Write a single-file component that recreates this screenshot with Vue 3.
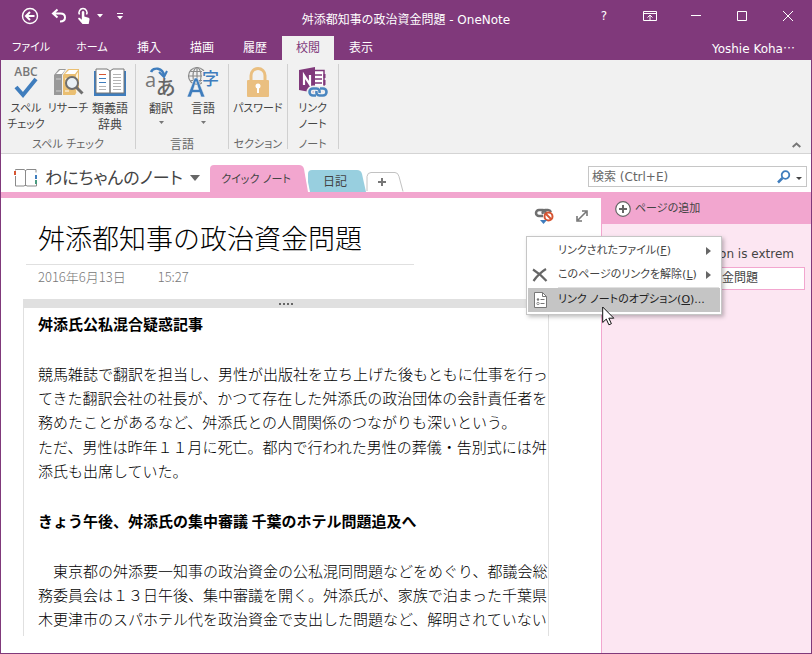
<script setup>
import { ref } from 'vue'

const tabs = [
  { label: 'ファイル', wide: true },
  { label: 'ホーム', wide: true },
  { label: '挿入' },
  { label: '描画' },
  { label: '履歴' },
  { label: '校閲' },
  { label: '表示' },
]
const activeTab = ref('校閲')

const groups = [
  {
    name: 'スペル チェック',
    tools: [
      { icon: 'spell', lines: ['スペル', 'チェック'] },
      { icon: 'research', lines: ['リサーチ'] },
      { icon: 'thesaurus', lines: ['類義語', '辞典'] },
    ],
  },
  {
    name: '言語',
    tools: [
      { icon: 'translate', lines: ['翻訳'], menu: true },
      { icon: 'language', lines: ['言語'], menu: true },
    ],
  },
  { name: 'セクション', tools: [{ icon: 'lock', lines: ['パスワード'] }] },
  { name: 'ノート', tools: [{ icon: 'linked', lines: ['リンク', 'ノート'] }] },
]

// Katakana labels are set one size smaller than kanji labels.
const isKana = (text) => /^[ァ-ヶー ]+$/.test(text)

const noteTitle = '舛添都知事の政治資金問題'
const query = ref('')
</script>

<template>
  <div class="window" lang="ja">
    <header class="titlebar">
      <div class="quick">
        <button class="q q-back" aria-label="戻る">
          <svg width="18" height="18" viewBox="0 0 18 18" fill="none" stroke="#fff"><circle cx="9" cy="9" r="7.5" stroke-width="1.4" /><path d="M13.5 9H5.5M9 5L5 9l4 4" stroke-width="2" /></svg>
        </button>
        <button class="q q-undo" aria-label="元に戻す">
          <svg width="16" height="16" viewBox="0 0 16 16" fill="none" stroke="#fff" stroke-width="2"><path d="M6.5 1.5L2 5.5l4.500 4M2 5.500h7.500c3 0 4.500 1.500 4.500 4s-2 4-5 4" /></svg>
        </button>
        <button class="q q-touch" aria-label="タッチ/マウス モードの切り替え">
          <svg width="14" height="18" viewBox="0 0 14 18"><path d="M2.500 7.500A4 4 0 1 1 9.500 7.500" fill="none" stroke="#fff" stroke-width="1.500" /><path d="M4.800 5a1.300 1.300 0 0 1 2.500 0v4.500l4.200 1.200c.8.3 1.200.9 1 1.700l-.8 4.600H5.500L1.200 12c-.3-1 .9-1.600 1.700-.9l1.900 1.600z" fill="#fff" /></svg>
          <svg class="q-caret" width="6" height="4" viewBox="0 0 6 4"><path d="M0 0h6L3 3.500z" fill="#fff" /></svg>
        </button>
        <button class="q q-more" aria-label="クイック アクセス ツール バーのユーザー設定">
          <svg width="6" height="7" viewBox="0 0 6 7"><path d="M0 0h6v1H0zM0 3h6L3 6.500z" fill="#fff" /></svg>
        </button>
      </div>
      <h1 class="caption">{{ noteTitle }} - OneNote</h1>
      <div class="controls">
        <button class="ctl" aria-label="ヘルプ">?</button>
        <button class="ctl" aria-label="リボンの表示オプション">
          <svg width="14" height="10" viewBox="0 0 14 10" fill="none" stroke="#fff"><path d="M.5.5h13v9H.5zM1 2.500h12M7 9V4M4.500 6.500L7 4l2.500 2.500" /></svg>
        </button>
        <button class="ctl" aria-label="最小化">
          <svg width="10" height="2" viewBox="0 0 10 2"><path d="M0 0h10v1H0z" fill="#fff" /></svg>
        </button>
        <button class="ctl" aria-label="最大化">
          <svg width="10" height="10" viewBox="0 0 10 10"><path d="M.5.500h9v9h-9z" fill="none" stroke="#fff" /></svg>
        </button>
        <button class="ctl" aria-label="閉じる">
          <svg width="10" height="10" viewBox="0 0 10 10"><path d="M0 0l10 10M10 0L0 10" stroke="#fff" /></svg>
        </button>
      </div>
    </header>

    <nav class="tabs">
      <button
        v-for="t in tabs"
        :key="t.label"
        class="tab"
        :class="{ active: t.label === activeTab, wide: t.wide, kana: isKana(t.label) }"
        @click="activeTab = t.label"
      >{{ t.label }}</button>
      <button class="account">Yoshie Koha<span class="dots">…</span></button>
    </nav>

    <section class="ribbon">
      <div v-for="g in groups" :key="g.name" class="group">
        <div class="tools">
          <button v-for="t in g.tools" :key="t.icon" class="tool">
            <svg v-if="t.icon === 'spell'" width="32" height="32" viewBox="0 0 32 32">
              <text x="16" y="10" text-anchor="middle" font-size="12" font-family="Open Sans, sans-serif" font-weight="600" fill="#777">ABC</text>
              <path d="M6 21l7 8L26 13" fill="none" stroke="#3f7dbd" stroke-width="4" />
            </svg>
            <svg v-else-if="t.icon === 'research'" width="32" height="32" viewBox="0 0 32 32">
              <path d="M2 9l5-6h7l-4 6v20H2z" fill="#999" /><path d="M4 8l4-4h5l-3 4z" fill="#fff" /><path d="M4 13h5M4 25h5" stroke="#ccc" stroke-width="1" />
              <path d="M11 9l5-6h11v19l-4 7H11z" fill="#eabf72" /><path d="M13 8l4-4h9l-3 4z" fill="#fff" /><path d="M24 9l2-3v18l-2 3z" fill="#fff3d8" /><path d="M13 13h4M13 25h4" stroke="#fff" />
              <circle cx="20" cy="17" r="6" fill="#e9f0f5" stroke="#6f6f6f" stroke-width="2" /><path d="M24.500 21.500l6 6" stroke="#6f6f6f" stroke-width="3" />
            </svg>
            <svg v-else-if="t.icon === 'thesaurus'" width="32" height="32" viewBox="0 0 32 32">
              <path d="M0 5h32v25H0z" fill="#3f7dbd" /><path d="M2 3h11l3 2 3-2h11v24H2z" fill="#fff" stroke="#777" /><path d="M16 5v22" stroke="#777" stroke-width="1.500" />
              <path d="M5 8.500h7" stroke="#d65532" /><path d="M5 12.500h7M5 16.500h7" stroke="#3f7dbd" /><path d="M5 20.500h7M19 8.500h8M19 11.500h8M19 14.500h8M19 17.500h8M19 20.500h8M19 23.500h8M5 23.500h7" stroke="#b4b4b4" />
            </svg>
            <svg v-else-if="t.icon === 'translate'" width="32" height="32" viewBox="0 0 32 32">
              <text x="0" y="21" font-size="20" font-family="Open Sans, sans-serif" fill="#777">a</text>
              <text x="11" y="29" font-size="20" font-weight="500" font-family="Noto Sans CJK JP, sans-serif" fill="#666">あ</text>
              <path d="M6 6c2-5 12-5 13 4" fill="none" stroke="#3f7dbd" stroke-width="2.500" /><path d="M14 6l5 5 3-6" fill="none" stroke="#3f7dbd" stroke-width="2" />
            </svg>
            <svg v-else-if="t.icon === 'language'" width="32" height="32" viewBox="0 0 32 32">
              <g fill="none" stroke="#8a8a8a" stroke-width="1.200"><circle cx="10" cy="10" r="8.500" /><ellipse cx="10" cy="10" rx="4" ry="8.500" /><path d="M10 1v17M2 10h16M3.500 5.500h13M3.500 14.500h13" /></g>
              <path d="M15 5h17v15H15z" fill="#f1f1f1" />
              <text x="15" y="19" font-size="17" font-family="Noto Sans CJK JP, sans-serif" font-weight="500" fill="#3f7dbd">字</text>
              <path d="M0 31l7.500-19h3L18 31h-4l-1.500-4.500H5.500L4 31zM6.500 23.500h5L9 15.500z" fill="#3f7dbd" stroke="#f1f1f1" stroke-width=".6" />
            </svg>
            <svg v-else-if="t.icon === 'lock'" width="32" height="32" viewBox="0 0 32 32">
              <path d="M9 16V9.500a7 7 0 0 1 14 0V16" fill="none" stroke="#eabf80" stroke-width="3" /><rect x="5" y="14" width="22" height="17" rx="1" fill="#eabf80" />
              <circle cx="16" cy="20" r="2.500" fill="#fff" /><path d="M15 20h2v7h-2z" fill="#fff" />
            </svg>
            <svg v-else width="32" height="32" viewBox="0 0 32 32">
              <path d="M15 4.500h12v20H15z" fill="#fff" stroke="#80397b" stroke-width="1.500" /><path d="M18 9h7M18 13h7M18 17h7" stroke="#80397b" stroke-width="1.400" /><path d="M27.500 8v4M27.500 14v5" stroke="#80397b" stroke-width="2" />
              <path d="M2 4l16-3v26L2 24z" fill="#80397b" /><path d="M7 19V9.500l6 9V9" fill="none" stroke="#fff" stroke-width="2.200" />
              <g fill="none" stroke="#f1f1f1" stroke-width="6"><rect x="12.500" y="22.500" width="10" height="7" rx="3.500" /><rect x="19.500" y="22.500" width="10" height="7" rx="3.500" /></g>
              <g fill="none" stroke="#4a86c0" stroke-width="2.600"><path d="M19 29.500h-3a3.500 3.500 0 0 1 0-7h3.500c2.500 0 3.500 2 3 4.500" /><path d="M23 22.500h3a3.500 3.500 0 0 1 0 7h-3.500c-2.500 0-3.500-2-3-4.500" /></g>
            </svg>
            <span class="tool-label"><span v-for="l in t.lines" :key="l" :class="{ kana: isKana(l) }">{{ l }}</span></span>
            <svg v-if="t.menu" class="tool-caret" width="5" height="3" viewBox="0 0 5 3"><path d="M0 0h5L2.500 3z" fill="#777" /></svg>
          </button>
        </div>
        <div class="group-name" :class="{ kana: isKana(g.name) }">{{ g.name }}</div>
      </div>
      <button class="collapse" aria-label="リボンを折りたたむ">
        <svg width="9" height="6" viewBox="0 0 9 6"><path d="M.7 5l3.800-3.500L8.300 5" fill="none" stroke="#777" stroke-width="2" /></svg>
      </button>
    </section>

    <div class="notebar">
      <button class="notebook">
        <svg width="24" height="20" viewBox="0 0 24 20">
          <path d="M1.500 2.500V1.500H10l1.500 1 1.500-1h9v3M22.500 12v6H13l-1.500-1-1.500 1H1.500V8M11.500 2v16" fill="none" stroke="#8a8a8a" />
          <path d="M0 3h2v4H0z" fill="#d65532" /><path d="M21 7h2v4h-2z" fill="#3f7dbd" /><path d="M21 12h2v4h-2z" fill="#4a9c80" />
        </svg>
        <span>わにちゃんのノート</span>
        <svg width="10" height="6" viewBox="0 0 10 6"><path d="M0 0h10L5 6z" fill="#666" /></svg>
      </button>
      <button class="section quick-notes kana">
        <svg class="shape" width="98" height="27" viewBox="0 0 98 27"><path d="M0 27V4q0-4 4-4h85q4 0 5 4l4 23z" fill="#f2a6cf" /></svg>
        <span>クイック ノート</span>
      </button>
      <button class="section diary">
        <svg class="shape" width="58" height="22" viewBox="0 0 58 22"><path d="M2 22L0 12V4q0-4 4-4h45q4 0 5 4l4 18z" fill="#98cfdf" /></svg>
        <span>日記</span>
      </button>
      <button class="section add" aria-label="新しいセクションの作成">
        <svg class="shape" width="38" height="20" viewBox="0 0 38 20" fill="none"><path d="M1 19V4.500Q1.500.500 5 .500h24q3 0 4 4L37 19.500" stroke="#c2c2c2" /><path d="M12 10h8M16 6v8" stroke="#777" stroke-width="2" /></svg>
      </button>
      <form class="search" @submit.prevent>
        <input v-model="query" type="search" placeholder="検索 (Ctrl+E)" aria-label="検索" />
        <button aria-label="検索の実行">
          <svg width="26" height="14" viewBox="0 0 26 14"><circle cx="8.500" cy="5" r="3.800" fill="none" stroke="#3f7dbd" stroke-width="1.800" /><path d="M5.500 8L1 12.500" stroke="#3f7dbd" stroke-width="2.500" /><path d="M19 7h6l-3 3z" fill="#444" /></svg>
        </button>
      </form>
    </div>

    <main class="workspace">
      <article class="page">
        <h2 class="page-title">{{ noteTitle }}</h2>
        <p class="stamp"><span>2016年6月13日</span><span>15:27</span></p>
        <div class="note">
          <div class="grip"><svg width="14" height="2" viewBox="0 0 14 2"><path d="M0 0h2v2H0zM4 0h2v2H4zM8 0h2v2H8zM12 0h2v2h-2z" fill="#666" /></svg></div>
          <div class="note-body">
            <h3>舛添氏公私混合疑惑記事</h3>
            <div class="paras">
              <p>競馬雑誌で翻訳を担当し、男性が出版社を立ち上げた後もともに仕事を行ってきた翻訳会社の社長が、かつて存在した舛添氏の政治団体の会計責任者を務めたことがあるなど、舛添氏との人間関係のつながりも深いという。</p>
              <p>ただ、男性は昨年１１月に死亡。都内で行われた男性の葬儀・告別式には舛添氏も出席していた。</p>
            </div>
            <h3>きょう午後、舛添氏の集中審議 千葉のホテル問題追及へ</h3>
            <p>　東京都の舛添要一知事の政治資金の公私混同問題などをめぐり、都議会総務委員会は１３日午後、集中審議を開く。舛添氏が、家族で泊まった千葉県木更津市のスパホテル代を政治資金で支出した問題など、解明されていない</p>
          </div>
        </div>

        <div class="page-tools">
          <button aria-label="リンク ノート">
            <svg width="20" height="18" viewBox="0 0 20 18">
              <g fill="none" stroke="#6f6f6f" stroke-width="2.500"><path d="M9 9H5a3 3 0 0 1 0-6h4c2.500 0 3 2 2 4" /><path d="M9 7c-1-2 0-4 2-4h3c1.500 0 2.500 1 3 2" /></g>
              <circle cx="14.500" cy="9.500" r="4" fill="#fff" stroke="#d65532" stroke-width="2" /><path d="M11.500 6.500l6 6" stroke="#d65532" stroke-width="2" /><path d="M6 13h7l-3.500 4z" fill="#3f7dbd" />
            </svg>
          </button>
          <button aria-label="全画面表示">
            <svg width="12" height="12" viewBox="0 0 12 12"><path d="M2 10l8-8M6 1h5v5M1 6v5h5" fill="none" stroke="#777" stroke-width="1.600" /></svg>
          </button>
          <div class="menu kana" role="menu">
            <button class="item" role="menuitem">
              <span class="icon"></span><span>リンクされたファイル(<u>F</u>)</span>
              <svg class="sub" width="5" height="8" viewBox="0 0 5 8"><path d="M0 0l5 4-5 4z" fill="#666" /></svg>
            </button>
            <button class="item" role="menuitem">
              <span class="icon"><svg width="16" height="14" viewBox="0 0 16 14"><path d="M1 1.500C5 4 10 8 14.500 13M14 1C9 4 5 8 1.500 13" fill="none" stroke="#666" stroke-width="2.200" /></svg></span>
              <span>このページのリンクを解除(<u>L</u>)</span>
              <svg class="sub" width="5" height="8" viewBox="0 0 5 8"><path d="M0 0l5 4-5 4z" fill="#666" /></svg>
            </button>
            <hr />
            <button class="item hover" role="menuitem">
              <span class="icon"><svg width="13" height="16" viewBox="0 0 13 16"><path d="M.5.500h8l4 4v11H.5z" fill="#fff" stroke="#777" /><path d="M8.500.500v4h4M6.500 7.500h4M6.500 11.500h4" fill="none" stroke="#777" /><circle cx="4" cy="7.500" r="1.200" fill="#777" /><circle cx="4" cy="11.500" r="1.200" fill="#fff" stroke="#777" stroke-width=".8" /></svg></span>
              <span>リンク ノートのオプション(<u>O</u>)...</span>
            </button>
            <svg class="pointer" width="13" height="20" viewBox="0 0 13 20"><path d="M.7 1v15.500l3.600-3.400 2.600 5.700 2.500-1.100-2.600-5.500h5z" fill="#fff" stroke="#111" /></svg>
          </div>
        </div>
      </article>

      <aside class="pages">
        <button class="add-page kana">
          <svg width="16" height="16" viewBox="0 0 16 16"><circle cx="8" cy="8" r="7.300" fill="#fff" stroke="#666" stroke-width="1.200" /><path d="M4 8h8M8 4v8" stroke="#666" stroke-width="2" /></svg>
          <span>ページの追加</span>
        </button>
        <a class="page-link previous" href="#">on is extrem</a>
        <a class="page-link current" href="#">金問題</a>
      </aside>
    </main>
  </div>
</template>

<style>
body {
  margin: 0;
}
</style>

<style scoped>
* {
  box-sizing: border-box;
}
.window {
  display: flex;
  flex-direction: column;
  min-height: 100vh;
  border: solid #80397b;
  border-width: 0 1px 1px;
  background: #fff;
  color: #444;
  font-family: "DejaVu Sans", "Noto Sans CJK JP", sans-serif;
  font-size: 12px;
  line-height: 16px;
  font-feature-settings: "palt";
  overflow: hidden;
}
button {
  border: 0;
  padding: 0;
  background: none;
  color: inherit;
  font: inherit;
  font-feature-settings: inherit;
  white-space: nowrap;
}
h1, h2, h3, p {
  margin: 0;
}
svg {
  display: block;
  flex: none;
  overflow: visible;
}
.kana {
  font-size: 11px;
}

.titlebar {
  display: grid;
  grid-template-columns: 1fr auto 1fr;
  height: 36px;
  background: #80397b;
  color: #fff;
}
.quick {
  display: flex;
  align-items: center;
  height: 32px;
  padding-left: 20px;
}
.q {
  display: flex;
  align-items: center;
}
.q-undo {
  margin-left: 12px;
}
.q-touch {
  margin-left: 10px;
  gap: 6px;
}
.q-more {
  margin-left: 14px;
}
.caption {
  padding-top: 4px;
  font-size: 12px;
  font-weight: 400;
  line-height: 32px;
}
.controls {
  display: flex;
  justify-content: flex-end;
  height: 32px;
}
.ctl {
  display: flex;
  align-items: center;
  justify-content: center;
  width: 46px;
}
.tabs {
  display: flex;
  gap: 1px;
  height: 24px;
  background: #80397b;
  color: #fff;
}
.tab {
  padding: 0 14px;
}
.tab.wide {
  width: 60px;
  padding: 0;
}
.tab.active {
  background: #f1f1f1;
  color: #80397b;
}
.account {
  margin-left: auto;
  padding-right: 16px;
}
.dots {
  font-family: "Noto Sans CJK JP", sans-serif;
}

.ribbon {
  display: flex;
  height: 94px;
  padding: 4px 0;
  border-bottom: 1px solid #d4d4d4;
  background: #f1f1f1;
}
.group {
  display: flex;
  flex-direction: column;
  justify-content: space-between;
  padding: 2px 4px 0;
  border-right: 1px solid #d0d0d0;
}
.tools {
  display: flex;
  justify-content: center;
}
.tool {
  display: flex;
  flex-direction: column;
  align-items: center;
  min-width: 42px;
}
.tool-label {
  display: flex;
  flex-direction: column;
  align-items: center;
  padding-top: 3px;
}
.tool-caret {
  margin-top: 4px;
}
.group-name {
  margin-bottom: -4px;
  color: #666;
  text-align: center;
}
.collapse {
  margin-left: auto;
  padding: 0 10px 1px 0;
  align-self: flex-end;
}

.notebar {
  display: flex;
  align-items: flex-end;
  height: 38px;
}
.notebook {
  display: flex;
  align-items: center;
  gap: 7px;
  align-self: stretch;
  width: 209px;
  padding: 9px 0 0 13px;
  font-size: 17px;
  flex: none;
}
.section {
  position: relative;
  flex: none;
}
.section span {
  position: relative;
}
.shape {
  position: absolute;
  left: 0;
  bottom: 0;
}
.quick-notes {
  width: 98px;
  height: 27px;
  padding: 2px 6px 0 0;
}
.diary {
  width: 58px;
  height: 22px;
  padding: 2px 4px 0 0;
}
.add {
  width: 38px;
  height: 20px;
}
.search {
  display: flex;
  align-items: center;
  width: 219px;
  height: 21px;
  margin: 0 4px 5px auto;
  border: 1px solid #c6c6c6;
}
.search input {
  flex: 1;
  min-width: 0;
  padding: 0 3px;
  border: 0;
  outline: 0;
  background: none;
  color: #444;
  font: inherit;
}
.search input::placeholder {
  color: #666;
  opacity: 1;
}
.search button {
  padding-right: 3px;
}

.workspace {
  display: flex;
  flex: 1;
  border-top: 6px solid #f2a6cf;
}
.page {
  position: relative;
  display: flex;
  flex-direction: column;
  flex: 1;
  min-width: 0;
  padding: 20px 52px 17px 22px;
  color: #000;
  font-family: "Noto Sans CJK JP", sans-serif;
  font-feature-settings: normal;
}
.page-title {
  width: 388px;
  margin-left: 3px;
  padding: 0 0 6px 12px;
  border-bottom: 1px solid #e0e0e0;
  font-size: 27px;
  font-weight: 300;
  line-height: 40px;
  white-space: nowrap;
}
.stamp {
  display: flex;
  gap: 32px;
  padding: 4px 0 0 15px;
  color: #777;
  font-size: 13px;
  font-weight: 300;
  line-height: 16px;
}
.note {
  flex: 1;
  margin-top: 14px;
  border: solid #e0e0e0;
  border-width: 0 1px;
}
.grip {
  display: flex;
  align-items: center;
  justify-content: center;
  height: 9px;
  background: #e0e0e0;
}
.note-body {
  display: flex;
  flex-direction: column;
  gap: 26px;
  padding: 4px 0 0 14px;
  font-size: 15px;
  font-weight: 300;
  line-height: 24px;
}
.note-body h3 {
  font-size: 15px;
  font-weight: 700;
}
.paras {
  display: flex;
  flex-direction: column;
  gap: 1px;
}
.page-tools {
  position: absolute;
  top: 9px;
  right: 13px;
  z-index: 2;
  display: flex;
  align-items: center;
  gap: 22px;
  font-family: "DejaVu Sans", "Noto Sans CJK JP", sans-serif;
  font-feature-settings: "palt";
}
.menu {
  position: absolute;
  top: 29px;
  right: -134px;
  width: 196px;
  padding: 2px 1px;
  border: 1px solid #c6c6c6;
  background: #fff;
  box-shadow: 2px 2px 4px rgba(0, 0, 0, 0.25);
  color: #444;
}
.item {
  display: flex;
  align-items: center;
  width: 100%;
  height: 24px;
}
.item .icon {
  display: flex;
  flex: none;
  justify-content: center;
  width: 24px;
  margin-right: 6px;
}
.item .sub {
  margin: 0 9px 0 auto;
}
.item.hover {
  background: #c5c5c5;
  color: #222;
}
.menu hr {
  height: 1px;
  margin: 0 1px 0 30px;
  border: 0;
  background: #e0e0e0;
}
.pointer {
  position: absolute;
  left: 75px;
  bottom: -12px;
}

.pages {
  width: 210px;
  flex: none;
  border-left: 1px solid #f2a6cf;
  background: #fce6f2;
}
.add-page {
  display: flex;
  align-items: center;
  gap: 4px;
  width: 100%;
  height: 26px;
  padding: 0 0 4px 13px;
  background: #f2a6cf;
}
.page-link {
  display: block;
  height: 23px;
  margin-right: 6px;
  padding-left: 120px;
  color: #444;
  line-height: 21px;
  text-decoration: none;
}
.previous {
  margin-top: 20px;
  padding-left: 0;
  padding-right: 11px;
  text-align: right;
}
.current {
  border: 1px solid #f2a6cf;
  border-left: 0;
  background: #fff;
}
</style>
